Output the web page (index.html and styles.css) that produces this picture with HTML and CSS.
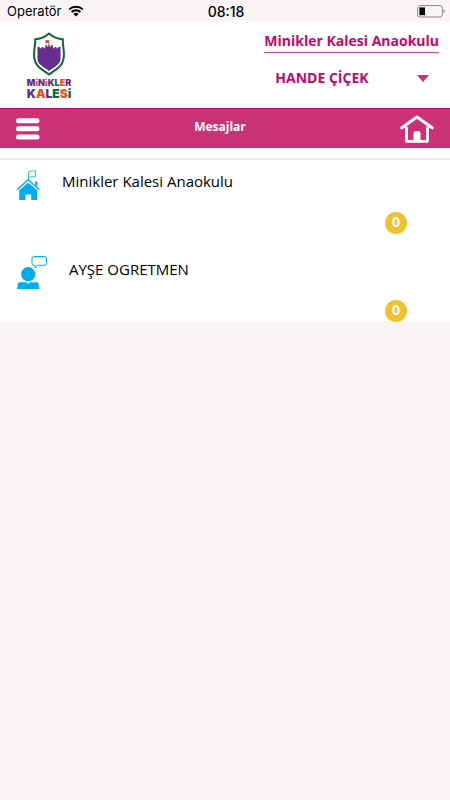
FILE: index.html
```html
<!DOCTYPE html>
<html lang="tr">
<head>
    <meta charset="UTF-8">
    <meta name="viewport" content="width=device-width, initial-scale=1.0">
    <title>Mesajlar</title>
    <link rel="stylesheet" href="styles.css">
</head>
<body>
    <div class="status">
        <div class="carrier">
            <span>Operatör</span>
            <svg width="16" height="12" viewBox="0 0 16 12">
                <path d="M1.2 4.4a9.8 9.8 0 0 1 13.6 0M3.6 7a6.3 6.3 0 0 1 8.8 0" fill="none" stroke="#000" stroke-width="2"/>
                <path d="M8 11.6L5.4 9a3.7 3.7 0 0 1 5.2 0z"/>
            </svg>
        </div>
        <time class="clock">08:18</time>
        <div class="battery">
            <svg width="28" height="13" viewBox="0 0 28 13">
                <rect x=".6" y=".6" width="24.8" height="11.4" rx="2.5" fill="none" stroke="#8a8888"/>
                <rect x="2.4" y="2.4" width="5.6" height="7.8"/>
                <path d="M26.6 4.3v4q1.2-.6 1.2-2t-1.2-2z" fill="#8a8888"/>
            </svg>
        </div>
    </div>

    <header class="header">
        <div class="logo">
            <svg width="32" height="44" viewBox="0 0 32 44">
                <path d="M16 1.500C12 5 7 7 2.200 7.200 2.600 14-.2 20 1.600 27.500 3.200 35 10 38 16 42.500 22 38 28.800 35 30.400 27.500 32.200 20 29.400 14 29.800 7.200 25 7 20 5 16 1.500z" fill="#fff" stroke="#12663a" stroke-width="2"/>
                <path d="M4.500 15h2.300v1.300h1.800V15h2v1.300h1.600v-3h2v1.500h1v-1.500h1.800v1.500h1v-1.500h2v3h1.400V15h2v1.300h1.800V15h2.300V27C27.500 32.500 21 35 16 39 11 35 4.500 32.500 4.500 27z" fill="#662d91"/>
                <path d="M15.800 14V8.500h-3v2.200h2.600" fill="#e8451c" stroke="#e8451c" stroke-width=".7"/>
            </svg>
            <div class="logo-small"><span class="purple">M</span><span class="red">i</span><span class="purple">N</span><span class="red">i</span><span class="purple">K</span><span class="green">L</span><span class="red">E</span><span class="purple">R</span></div>
            <div class="logo-big"><span class="purple">K</span><span class="red">A</span><span class="purple">L</span><span class="green">E</span><span class="red">S</span><span class="green">i</span></div>
        </div>
        <div class="account">
            <a class="school" href="#">Minikler Kalesi Anaokulu</a>
            <button class="user" type="button">
                <span>HANDE ÇİÇEK</span>
                <svg width="12" height="7" viewBox="0 0 12 7"><path d="M0 0h12L6 7z" fill="#d12d78"/></svg>
            </button>
        </div>
    </header>

    <nav class="bar">
        <button class="icon-btn" type="button" aria-label="Menü">
            <svg width="24" height="22" viewBox="0 0 24 22">
                <path d="M2.500 2.700h18.500M2.500 10.800h18.500M2.500 18.900h18.500" stroke="#fff" stroke-width="5" stroke-linecap="round"/>
            </svg>
        </button>
        <h1>Mesajlar</h1>
        <a class="icon-btn" href="#" aria-label="Ana sayfa">
            <svg width="34" height="28" viewBox="0 0 34 28" fill="none" stroke="#fff" stroke-linecap="round" stroke-linejoin="round">
                <path d="M1.800 12.800L17 2l15.200 10.800" stroke-width="3"/>
                <path d="M6.500 13v13.300h21V13" stroke-width="2.800"/>
                <path d="M13.500 26v-8q0-1.800 1.800-1.800h3.400q1.800 0 1.800 1.800v8z" fill="#fff" stroke="none"/>
            </svg>
        </a>
    </nav>

    <main class="list">
        <a class="row" href="#">
            <svg class="row-icon" width="32" height="36" viewBox="0 -2 32 36">
                <path d="M12.500 11V2.500q1.500-.6 3.500-.5t3.500-.6V7.300q-1.500.7-3.500.5t-3.500.6" fill="none" stroke="#00aeef" stroke-width=".8"/>
                <path d="M19 12.500h2.400v5L19 15.500z" fill="#00aeef"/>
                <path d="M1 20.800L12.200 10.800 23.400 20.800" fill="none" stroke="#00aeef" stroke-width="1.500"/>
                <path d="M3.200 21.200l9-7.800 9 7.800v9.800h-6v-5.600H9.500V31H3.200z" fill="#00aeef"/>
            </svg>
            <span class="row-name">Minikler Kalesi Anaokulu</span>
            <span class="badge">0</span>
        </a>
        <a class="row" href="#">
            <svg class="row-icon" width="32" height="36" viewBox="0 0 32 36">
                <path d="M18 1.500h10.500q2 0 2 2v4.800q0 2-2 2H22l-3 2.700v-2.700h-1q-2 0-2-2V3.500q0-2 2-2z" fill="none" stroke="#00aeef"/>
                <circle cx="12.200" cy="19.200" r="7.100" fill="#00aeef"/>
                <path d="M1 34l1-5.500q.3-1.300 1.700-1.300H10.400l1.800 1.900 1.800-1.900h6.700q1.400 0 1.700 1.300l1 5.500z" fill="#00aeef"/>
            </svg>
            <span class="row-name person">AYŞE ÖĞRETMEN</span>
            <span class="badge">0</span>
        </a>
    </main>
</body>
</html>
```
FILE: styles.css
```css
* { box-sizing: border-box; }
body {
    margin: 0;
    background: #f9f5f4;
    font-family: 'Open Sans', 'Noto Sans', sans-serif;
    color: #000;
}
a { color: inherit; text-decoration: none; }
button {
    padding: 0;
    border: none;
    background: none;
    color: inherit;
    font: inherit;
    cursor: pointer;
}
svg { display: block; flex: none; }

.status {
    display: grid;
    grid-template-columns: 1fr auto 1fr;
    align-items: center;
    height: 21px;
    padding: 1px 5px 0 7px;
    font: 13px Inter, sans-serif;
}
.carrier {
    display: flex;
    align-items: center;
    gap: 6px;
}
.clock {
    font-size: 14px;
    font-weight: 500;
}
.battery { justify-self: end; }

.header {
    display: flex;
    justify-content: space-between;
    height: 87px;
    padding: 11px 11px 0 25px;
    background: #fff;
}
.logo {
    display: flex;
    flex-direction: column;
    align-items: center;
    width: 48px;
    font-family: Inter, sans-serif;
    font-weight: 900;
    white-space: nowrap;
}
.logo-small {
    margin-top: 2px;
    font-size: 9px;
    line-height: 9px;
}
.logo-big {
    font-size: 12px;
    line-height: 14px;
}
.purple { color: #662d91; }
.red { color: #f04e1c; }
.green { color: #12663a; }

.account {
    color: #c9056b;
    font-size: 14px;
    font-weight: 700;
}
.school {
    display: block;
    height: 21px;
    border-bottom: 1px solid #d84a8c;
    line-height: 17px;
}
.user {
    display: flex;
    justify-content: space-between;
    align-items: center;
    width: 100%;
    margin-top: 15px;
    padding: 0 10px 0 11px;
    line-height: 20px;
}

.bar {
    display: flex;
    justify-content: space-between;
    align-items: center;
    height: 40px;
    padding: 0 16px;
    border-top: 1px solid #bd0b62;
    background: #cc3178;
    color: #fff;
}
.bar h1 {
    margin: 0 0 4px;
    font-size: 12px;
    line-height: 16px;
}

.list {
    display: flex;
    flex-direction: column;
    gap: 14px;
    padding-top: 10px;
    background: #fff;
}
.row {
    display: grid;
    grid-template-columns: 46px 1fr 22px;
    grid-template-rows: 52px 22px;
    height: 74px;
    padding: 0 43px 0 16px;
}
.row:first-child {
    height: 76px;
    border-top: 2px solid #e8e8e8;
}
.row-icon { margin-top: 7px; }
.row-name {
    height: 18px;
    margin-top: 15px;
    overflow: hidden;
    font-size: 15px;
    line-height: 12px;
}
.person { padding-left: 7px; }
.badge {
    grid-column: 3;
    grid-row: 2;
    width: 22px;
    height: 22px;
    border-radius: 50%;
    background: #f3c02e;
    color: #fff;
    font-size: 14px;
    font-weight: 700;
    line-height: 19px;
    text-align: center;
}
```
